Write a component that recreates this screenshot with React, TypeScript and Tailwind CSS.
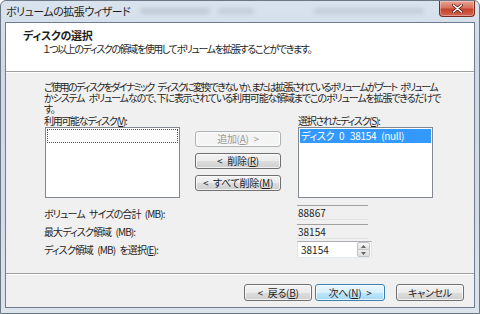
import React from "react";

type Variant = "normal" | "default" | "disabled";

const buttonStyles: Record<Variant, string> = {
  normal:
    "border-[#707070] text-[#1e1e1e] bg-[linear-gradient(to_bottom,#f2f2f2_0%,#ebebeb_50%,#dddddd_51%,#cfcfcf_100%)]",
  default:
    "border-[#3c7fb1] text-[#1e1e1e] bg-[linear-gradient(to_bottom,#eaf6fd_0%,#d9f0fc_50%,#bee6fd_51%,#a7d9f5_100%)]",
  disabled: "border-[#adb2b5] text-[#9a9a9a] bg-[#f4f4f4]",
};

function WinButton({
  children,
  variant = "normal",
  className = "",
}: {
  children: React.ReactNode;
  variant?: Variant;
  className?: string;
}) {
  return (
    <div
      className={`flex items-center justify-center whitespace-nowrap rounded-[3px] border text-[10px] leading-none tracking-[-0.3px] [word-spacing:3px] shadow-[inset_0_0_0_1px_rgba(255,255,255,0.7)] ${buttonStyles[variant]} ${className}`}
    >
      {children}
    </div>
  );
}

function ReadOnlyField({value}: {value: string}) {
  return (
    <div className="flex h-[15px] w-[71px] items-center border-t border-b border-t-[#a0a0a0] border-b-[#e3e3e3] bg-[#f0f0f0] pl-px text-[10px] leading-none tracking-normal text-[#1e1e1e]">
      {value}
    </div>
  );
}

export default function App() {
  return (
    <div className="font-['Noto_Sans_CJK_JP','Noto_Sans',sans-serif] [font-feature-settings:'palt'] flex h-[314px] w-[480px] flex-col overflow-hidden rounded-t-[6px] border border-[#6b7785] bg-[linear-gradient(to_bottom,#d9e3ee_0%,#cfdae6_20%,#d4dde7_70%,#dde3ea_100%)] px-[4px] pb-[5px] text-[#1e1e1e]">
      {/* Title bar */}
      <div className="flex h-[21px] shrink-0 items-start justify-between">
        <div className="flex items-center pl-[1px] pt-[3px]">
          <span className="whitespace-nowrap text-[11px] leading-[14px] tracking-[-0.5px] text-[#1e1e1e]">
            ボリュームの拡張ウィザード
          </span>
          {/* blurred windows behind the glass */}
          <div className="ml-[10px] h-[6px] w-[70px] rounded-full bg-[#8c96a2] opacity-30 blur-[2px]" />
          <div className="ml-[8px] h-[6px] w-[36px] rounded-full bg-[#8c96a2] opacity-25 blur-[2px]" />
          <div className="ml-[60px] h-[6px] w-[110px] rounded-full bg-[#8c96a2] opacity-25 blur-[2px]" />
        </div>
        <div className="flex h-[16px] w-[36px] items-center justify-center rounded-b-[4px] border border-t-0 border-[#7a2a20] bg-[linear-gradient(to_bottom,#e8a293_0%,#d7725e_45%,#c5432d_55%,#d2654f_100%)] shadow-[inset_0_0_0_1px_rgba(255,255,255,0.35)]">
          <svg width="11" height="9" viewBox="0 0 11 9">
            <path d="M1.5 1 L9.5 8 M9.5 1 L1.5 8" stroke="#5b1a12" strokeWidth="3" strokeLinecap="round" />
            <path d="M1.5 1 L9.5 8 M9.5 1 L1.5 8" stroke="#ffffff" strokeWidth="1.6" strokeLinecap="round" />
          </svg>
        </div>
      </div>

      {/* Client area */}
      <div className="flex flex-1 flex-col border border-[#6d7d8f] bg-[#f0f0f0] text-[10px] tracking-[-1.3px] [word-spacing:3px]">
        {/* Header */}
        <div className="h-[49px] shrink-0 border-b border-[#a0a0a0] bg-white pl-[17px] pt-[6px]">
          <div className="whitespace-nowrap text-[11px] font-bold leading-[13px] tracking-[-0.3px]">ディスクの選択</div>
          <div className="whitespace-nowrap pl-[20px] leading-[13px] tracking-[-1.4px]">
            １つ以上のディスクの領域を使用してボリュームを拡張することができます。
          </div>
        </div>
        <div className="h-px shrink-0 bg-white" />

        {/* Body */}
        <div className="flex flex-1 flex-col pl-[38px] pt-[8px]">
          <div className="whitespace-nowrap leading-[11px]">
            <div className="tracking-[-1.65px]">
              ご使用のディスクをダイナミック ディスクに変換できないか、または拡張されているボリュームがブート ボリューム
            </div>
            <div className="tracking-[-1.15px]">
              かシステム ボリュームなので、下に表示されている利用可能な領域までこのボリュームを拡張できるだけで
            </div>
            <div>す。</div>
          </div>

          <div className="mt-[1px] flex">
            <div className="flex w-[136px] flex-col">
              <div className="h-[12px] whitespace-nowrap leading-[12px]">
                利用可能なディスク(<u>V</u>):
              </div>
              <div className="ml-px h-[71px] border border-[#828790] bg-white p-px">
                <div className="h-[14px] border border-dotted border-[#555]" />
              </div>
            </div>

            <div className="ml-[15px] flex w-[86px] flex-col gap-[6px] pt-[16px]">
              <WinButton variant="disabled" className="h-[16px]">
                追加(<u>A</u>) &gt;
              </WinButton>
              <WinButton className="h-[16px]">
                &lt; 削除(<u>R</u>)
              </WinButton>
              <WinButton className="h-[16px]">
                &lt; すべて削除(<u>M</u>)
              </WinButton>
            </div>

            <div className="ml-[17px] flex w-[135px] flex-col">
              <div className="h-[12px] whitespace-nowrap leading-[12px]">
                選択されたディスク(<u>S</u>):
              </div>
              <div className="h-[71px] border border-[#828790] bg-white p-px">
                <div className="flex h-[14px] items-center whitespace-nowrap bg-[#3399ff] pl-[1px] leading-none tracking-[-0.3px] text-white">
                  <span className="w-[49px] shrink-0">ディスク 0</span>
                  <span>38154 (null)</span>
                </div>
              </div>
            </div>
          </div>

          <div className="mt-[7px] grid grid-cols-[253px_auto] auto-rows-[18px] items-start tracking-[-0.9px]">
            <div className="whitespace-nowrap pt-[2px] leading-[13px]">ボリューム サイズの合計 (MB):</div>
            <ReadOnlyField value="88867" />
            <div className="whitespace-nowrap pt-[2px] leading-[13px]">最大ディスク領域 (MB):</div>
            <div className="pt-[1px]">
              <ReadOnlyField value="38154" />
            </div>
            <div className="whitespace-nowrap pt-[2px] leading-[13px]">
              ディスク領域 (MB) を選択(<u>E</u>):
            </div>
            <div className="flex h-[17px] w-[75px] items-center justify-between border border-[#abadb3] border-l-[#e2e3ea] border-r-[#e2e3ea] border-b-[#e3e9ef] bg-white pl-[3px] pr-px leading-none tracking-normal">
              <span>38154</span>
              <div className="flex h-[15px] w-[13px] flex-col">
                <div className="flex flex-1 items-center justify-center rounded-t-[2px] border border-[#c3c3c3] bg-[linear-gradient(to_bottom,#f6f6f6,#e2e2e2)]">
                  <svg width="5" height="3" viewBox="0 0 5 3">
                    <path d="M0 3 L2.5 0 L5 3 Z" fill="#606060" />
                  </svg>
                </div>
                <div className="flex flex-1 items-center justify-center rounded-b-[2px] border border-t-0 border-[#c3c3c3] bg-[linear-gradient(to_bottom,#eeeeee,#dddddd)]">
                  <svg width="5" height="3" viewBox="0 0 5 3">
                    <path d="M0 0 L2.5 3 L5 0 Z" fill="#606060" />
                  </svg>
                </div>
              </div>
            </div>
          </div>
        </div>

        {/* Separator */}
        <div className="h-px shrink-0 bg-[#a0a0a0]" />
        <div className="h-px shrink-0 bg-white" />

        {/* Footer */}
        <div className="flex h-[32px] shrink-0 items-start justify-end pr-[10px] pt-[9px]">
          <WinButton className="h-[17px] w-[68px]">
            &lt; 戻る(<u>B</u>)
          </WinButton>
          <WinButton variant="default" className="ml-[3px] h-[17px] w-[70px]">
            次へ(<u>N</u>) &gt;
          </WinButton>
          <WinButton className="ml-[11px] h-[17px] w-[68px]">キャンセル</WinButton>
        </div>
      </div>
    </div>
  );
}
